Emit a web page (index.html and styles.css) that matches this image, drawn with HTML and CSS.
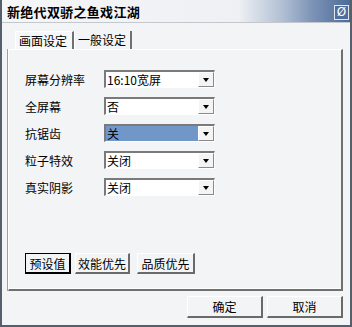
FILE: index.html
```html
<!DOCTYPE html>
<html lang="zh">
<head>
    <meta charset="UTF-8">
    <title>新绝代双骄之鱼戏江湖</title>
    <link rel="stylesheet" href="styles.css">
</head>
<body>
    <div class="window">
        <div class="titlebar">
            <span class="title">新绝代双骄之鱼戏江湖</span>
            <span class="close">&#216;</span>
        </div>

        <div class="tabs">
            <div class="tab active">画面设定</div>
            <div class="tab">一般设定</div>
        </div>

        <div class="panel">
            <div class="row">
                <span class="label">屏幕分辨率</span>
                <div class="combo"><span class="value">16:10宽屏</span><span class="arrow"></span></div>
            </div>
            <div class="row">
                <span class="label">全屏幕</span>
                <div class="combo"><span class="value">否</span><span class="arrow"></span></div>
            </div>
            <div class="row">
                <span class="label">抗锯齿</span>
                <div class="combo selected"><span class="value">关</span><span class="arrow"></span></div>
            </div>
            <div class="row">
                <span class="label">粒子特效</span>
                <div class="combo"><span class="value">关闭</span><span class="arrow"></span></div>
            </div>
            <div class="row">
                <span class="label">真实阴影</span>
                <div class="combo"><span class="value">关闭</span><span class="arrow"></span></div>
            </div>

            <div class="presets">
                <button class="btn default">预设值</button>
                <button class="btn">效能优先</button>
                <button class="btn">品质优先</button>
            </div>
        </div>

        <div class="footer">
            <button class="btn wide">确定</button>
            <button class="btn wide">取消</button>
        </div>
    </div>
</body>
</html>
```

FILE: styles.css
```css
* {
    box-sizing: border-box;
}
body {
    margin: 0;
    font-family: "Noto Sans CJK SC", "Liberation Sans", sans-serif;
    font-size: 12px;
    color: #000;
    background: #f3f4f6;
}
.window {
    width: 352px;
    height: 327px;
    border: 2px solid #55606c;
    border-top: none;
    background: #f3f4f6;
    display: flex;
    flex-direction: column;
}
.titlebar {
    height: 23px;
    display: flex;
    align-items: center;
    justify-content: space-between;
    padding: 0 1px 0 5px;
    border-bottom: 1px solid #c4c8ce;
    background: linear-gradient(to right, #f5f6f8 0%, #eef0f3 68%, #b4c2d6 80%, #7890b4 90%, #4d6b98 100%);
}
.title {
    font-weight: bold;
    font-size: 13px;
    letter-spacing: 0.3px;
}
.close {
    width: 15px;
    height: 15px;
    margin-top: 3px;
    border: 1px solid #dfe6ef;
    background: #4f6e9c;
    color: #fff;
    font-size: 12px;
    line-height: 13px;
    text-align: center;
    font-family: "DejaVu Sans", sans-serif;
}
.tabs {
    display: flex;
    padding: 8px 0 0 13px;
    height: 26px;
}
.tab {
    height: 18px;
    padding: 0 4px 0 3px;
    line-height: 18px;
    border-left: 1px solid #fff;
    border-right: 2px solid #707070;
}
.tab.active {
    border-top: 1px solid #fff;
    height: 19px;
    padding: 0 5px 0 3px;
    background: #f6f7f8;
}
.panel {
    margin: 0 7px 0 6px;
    height: 242px;
    border-top: 1px solid #fff;
    border-left: 1px solid #fff;
    border-right: 2px solid #707070;
    border-bottom: 2px solid #707070;
    box-shadow: inset 0 -1px 0 #fff, -1px 0 0 #a0a0a0;
    padding: 20px 0 0 16px;
    display: flex;
    flex-direction: column;
    gap: 9px;
}
.row {
    display: flex;
    align-items: center;
    height: 18px;
}
.label {
    width: 79px;
}
.combo {
    width: 111px;
    height: 18px;
    display: flex;
    border-top: 2px solid #7a7a7a;
    border-left: 2px solid #7a7a7a;
    border-bottom: 1px solid #fff;
    border-right: 1px solid #fff;
    background: #fff;
}
.value {
    flex: 1;
    padding-left: 1px;
    line-height: 15px;
}
.combo.selected .value {
    background: #7196c8;
}
.arrow {
    width: 16px;
    height: 15px;
    background: #f4f4f4;
    border-left: 1px solid #fff;
    border-top: 1px solid #fff;
    border-right: 1px solid #8a8a8a;
    border-bottom: 1px solid #8a8a8a;
    position: relative;
}
.arrow::after {
    content: "";
    position: absolute;
    left: 4px;
    top: 5px;
    border-left: 3px solid transparent;
    border-right: 3px solid transparent;
    border-top: 4px solid #000;
}
.presets {
    display: flex;
    gap: 4px;
    margin-top: 48px;
}
.btn {
    font-family: "Noto Sans CJK SC", "Liberation Sans", sans-serif;
    font-size: 12px;
    height: 21px;
    padding: 0;
    background: #f3f4f6;
    border-top: 1px solid #fff;
    border-left: 1px solid #fff;
    border-right: 2px solid #6a6a6a;
    border-bottom: 2px solid #6a6a6a;
    line-height: 17px;
}
.presets .btn {
    width: 55px;
}
.presets .btn.default {
    width: 46px;
    border: 2px solid #000;
    border-top-width: 1px;
    border-left-width: 1px;
}
.presets .btn:nth-child(3) {
    width: 58px;
    margin-left: 3px;
}
.footer {
    display: flex;
    justify-content: flex-end;
    gap: 4px;
    padding: 5px 7px 0 0;
}
.btn.wide {
    width: 76px;
    height: 22px;
}
```
